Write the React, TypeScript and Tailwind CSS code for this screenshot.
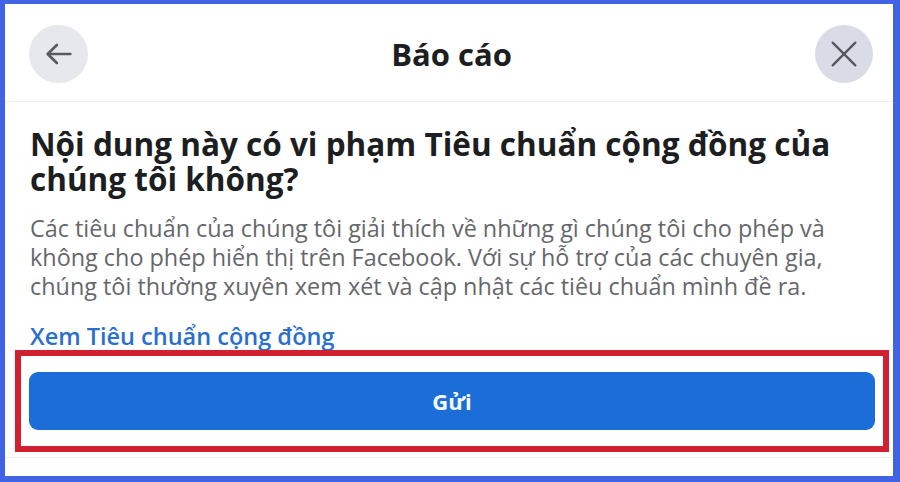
import React from "react";

export default function App() {
  return (
    <div
      className="w-[900px] h-[482px] bg-[#3f63e3] pl-[5px] pt-[4px] pr-[7px] pb-[6px]"
      style={{ fontFamily: '"Open Sans", "Noto Sans", sans-serif' }}
    >
      <div className="w-full h-full bg-white flex flex-col">
        <div className="flex items-center justify-between pl-[24px] pr-[20px] pt-[21px] pb-[18px] border-b border-[#eceef1]">
          <div className="w-[59px] h-[58px] rounded-full bg-[#e6e8ed] flex items-center justify-center">
            <svg width="34" height="34" viewBox="0 0 24 24" fill="none" stroke="#585b61" strokeWidth="1.9" strokeLinecap="round" strokeLinejoin="round">
              <path d="M20 12H4.5" />
              <path d="M10.5 5.6L4 12l6.5 6.4" />
            </svg>
          </div>
          <div className="text-[31px] font-bold text-[#1c1e21] leading-none">Báo cáo</div>
          <div className="w-[58px] h-[58px] rounded-full bg-[#d9dce6] flex items-center justify-center">
            <svg width="32" height="32" viewBox="0 0 24 24" fill="none" stroke="#55585f" strokeWidth="1.8" strokeLinecap="round">
              <path d="M3.5 3.5l17 17" />
              <path d="M20.5 3.5l-17 17" />
            </svg>
          </div>
        </div>
        <div className="pl-[25px] pr-[10px] pt-[24px]">
          <h1 className="text-[31.5px] font-bold text-[#1c1e21] leading-[35px] whitespace-nowrap">
            Nội dung này có vi phạm Tiêu chuẩn cộng đồng của
            <br />
            chúng tôi không?
          </h1>
          <p className="mt-[18px] text-[23.4px] text-[#65676b] leading-[29px] whitespace-nowrap">
            Các tiêu chuẩn của chúng tôi giải thích về những gì chúng tôi cho phép và
            <br />
            không cho phép hiển thị trên Facebook. Với sự hỗ trợ của các chuyên gia,
            <br />
            chúng tôi thường xuyên xem xét và cập nhật các tiêu chuẩn mình đề ra.
          </p>
          <div className="mt-[20px] text-[23.5px] font-semibold text-[#2a6fcf] leading-[30px]">
            Xem Tiêu chuẩn cộng đồng
          </div>
        </div>
        <div className="ml-[10px] mr-[4px] mt-[-1px] border-[6px] border-[#d1202f] px-[8px] py-[16px]">
          <div className="h-[58px] rounded-[9px] bg-[#1b6ed8] flex items-center justify-center text-[#f4f8ff] text-[22px] font-bold">
            Gửi
          </div>
        </div>
        <div className="mt-[5px] border-b border-[#eceef1]" />
      </div>
    </div>
  );
}
